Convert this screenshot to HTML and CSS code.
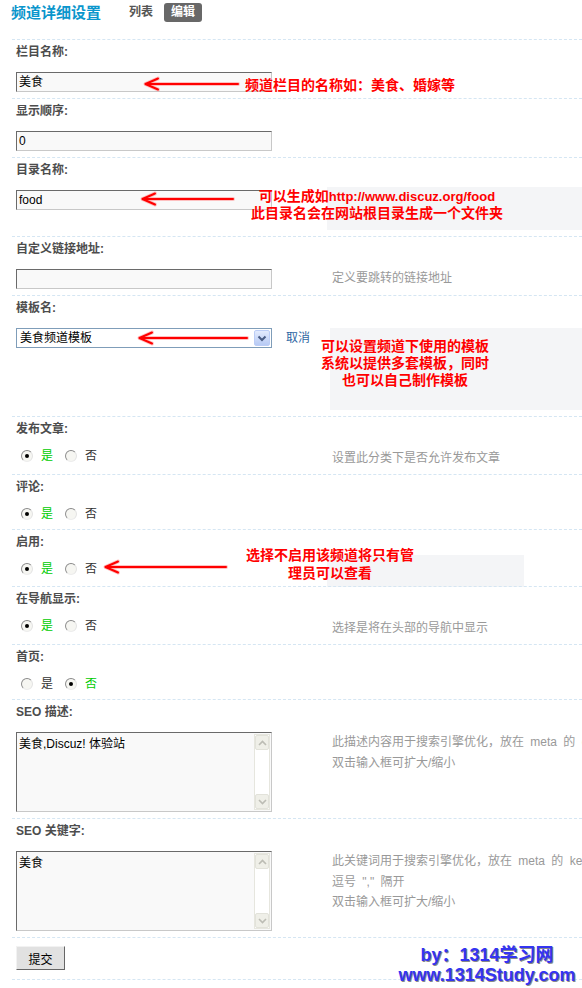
FILE: index.html
```html
<!DOCTYPE html>
<html lang="zh-CN">
<head>
<meta charset="utf-8">
<title>频道详细设置</title>
<link rel="stylesheet" href="styles.css">
</head>
<body>
<div class="page">
  <div class="header">
    <h1 class="title">频道详细设置</h1>
    <a class="tab tab-list" href="#">列表</a>
    <span class="tab tab-active">编辑</span>
  </div>

  <div class="form">
    <div class="row">
      <div class="label">栏目名称:</div>
      <div class="content">
        <div class="field"><div class="input">美食</div></div>
      </div>
      <svg class="arrow arrow-1" width="96" height="14" viewBox="0 0 96 14"><path d="M3 7 H95" class="glow"/><path d="M15 1.5 L2.5 7 L15 12.5" class="glow"/><path d="M3 7 H95" class="stroke"/><path d="M15 1.5 L2.5 7 L15 12.5" class="stroke"/></svg>
      <div class="note note-1">频道栏目的名称如：美食、婚嫁等</div>
    </div>

    <div class="row">
      <div class="label">显示顺序:</div>
      <div class="content">
        <div class="field"><div class="input">0</div></div>
      </div>
    </div>

    <div class="row">
      <div class="label">目录名称:</div>
      <div class="content">
        <div class="field"><div class="input">food</div></div>
        <div class="tip tip-dir"></div>
      </div>
      <svg class="arrow arrow-3" width="94" height="14" viewBox="0 0 94 14"><path d="M3 7 H93" class="glow"/><path d="M15 1.5 L2.5 7 L15 12.5" class="glow"/><path d="M3 7 H93" class="stroke"/><path d="M15 1.5 L2.5 7 L15 12.5" class="stroke"/></svg>
      <div class="note note-3">可以生成如<span class="note-latin">http://www.discuz.org/food</span><br>此目录名会在网站根目录生成一个文件夹</div>
    </div>

    <div class="row">
      <div class="label">自定义链接地址:</div>
      <div class="content">
        <div class="field"><div class="input"></div></div>
        <div class="hint">定义要跳转的链接地址</div>
      </div>
    </div>

    <div class="row">
      <div class="label">模板名:</div>
      <div class="content">
        <div class="field">
          <div class="select">
            <span class="select-text">美食频道模板</span>
            <span class="select-btn"><svg width="10" height="7" viewBox="0 0 10 7"><path d="M1.5 1.5 L5 5 L8.5 1.5" fill="none" stroke="#4a5d85" stroke-width="2"/></svg></span>
          </div>
          <a class="cancel" href="#">取消</a>
        </div>
        <div class="tip tip-tpl"></div>
      </div>
      <svg class="arrow arrow-5" width="111" height="14" viewBox="0 0 111 14"><path d="M3 7 H110" class="glow"/><path d="M15 1.5 L2.5 7 L15 12.5" class="glow"/><path d="M3 7 H110" class="stroke"/><path d="M15 1.5 L2.5 7 L15 12.5" class="stroke"/></svg>
      <div class="note note-5">可以设置频道下使用的模板<br>系统以提供多套模板，同时<br>也可以自己制作模板</div>
    </div>

    <div class="row">
      <div class="label">发布文章:</div>
      <div class="content">
        <div class="field">
          <div class="radios">
            <span class="opt on"><span class="radio"></span><span class="opt-text">是</span></span>
            <span class="opt"><span class="radio"></span><span class="opt-text">否</span></span>
          </div>
        </div>
        <div class="hint">设置此分类下是否允许发布文章</div>
      </div>
    </div>

    <div class="row">
      <div class="label">评论:</div>
      <div class="content">
        <div class="field">
          <div class="radios">
            <span class="opt on"><span class="radio"></span><span class="opt-text">是</span></span>
            <span class="opt"><span class="radio"></span><span class="opt-text">否</span></span>
          </div>
        </div>
      </div>
    </div>

    <div class="row">
      <div class="label">启用:</div>
      <div class="content">
        <div class="field">
          <div class="radios">
            <span class="opt on"><span class="radio"></span><span class="opt-text">是</span></span>
            <span class="opt"><span class="radio"></span><span class="opt-text">否</span></span>
          </div>
        </div>
        <div class="tip tip-on"></div>
      </div>
      <svg class="arrow arrow-8" width="124" height="14" viewBox="0 0 124 14"><path d="M3 7 H123" class="glow"/><path d="M15 1.5 L2.5 7 L15 12.5" class="glow"/><path d="M3 7 H123" class="stroke"/><path d="M15 1.5 L2.5 7 L15 12.5" class="stroke"/></svg>
      <div class="note note-8">选择不启用该频道将只有管<br>理员可以查看</div>
    </div>

    <div class="row">
      <div class="label">在导航显示:</div>
      <div class="content">
        <div class="field">
          <div class="radios">
            <span class="opt on"><span class="radio"></span><span class="opt-text">是</span></span>
            <span class="opt"><span class="radio"></span><span class="opt-text">否</span></span>
          </div>
        </div>
        <div class="hint">选择是将在头部的导航中显示</div>
      </div>
    </div>

    <div class="row">
      <div class="label">首页:</div>
      <div class="content">
        <div class="field">
          <div class="radios">
            <span class="opt"><span class="radio"></span><span class="opt-text">是</span></span>
            <span class="opt on"><span class="radio"></span><span class="opt-text">否</span></span>
          </div>
        </div>
      </div>
    </div>

    <div class="row">
      <div class="label">SEO 描述:</div>
      <div class="content">
        <div class="field">
          <div class="textarea">
            <div class="ta-text">美食,Discuz! 体验站</div>
            <div class="scroll">
              <span class="sbtn"><svg width="9" height="6" viewBox="0 0 9 6"><path d="M1 5 L4.5 1.5 L8 5" fill="none" stroke="#bcbcb4" stroke-width="1.6"/></svg></span>
              <span class="sbtn"><svg width="9" height="6" viewBox="0 0 9 6"><path d="M1 1 L4.5 4.5 L8 1" fill="none" stroke="#bcbcb4" stroke-width="1.6"/></svg></span>
            </div>
          </div>
        </div>
        <div class="hint hint-multi">此描述内容用于搜索引擎优化，放在 meta 的 description 标签中<br>双击输入框可扩大/缩小</div>
      </div>
    </div>

    <div class="row">
      <div class="label">SEO 关键字:</div>
      <div class="content">
        <div class="field">
          <div class="textarea">
            <div class="ta-text">美食</div>
            <div class="scroll">
              <span class="sbtn"><svg width="9" height="6" viewBox="0 0 9 6"><path d="M1 5 L4.5 1.5 L8 5" fill="none" stroke="#bcbcb4" stroke-width="1.6"/></svg></span>
              <span class="sbtn"><svg width="9" height="6" viewBox="0 0 9 6"><path d="M1 1 L4.5 4.5 L8 1" fill="none" stroke="#bcbcb4" stroke-width="1.6"/></svg></span>
            </div>
          </div>
        </div>
        <div class="hint hint-multi hint-kw">此关键词用于搜索引擎优化，放在 meta 的 keyword 标签中，多个关键字间请用半角<br>逗号 "," 隔开<br>双击输入框可扩大/缩小</div>
      </div>
    </div>

    <div class="row row-last">
      <button class="btn" type="button">提交</button>
      <div class="watermark">by：1314学习网<br>www.1314Study.com</div>
    </div>
  </div>
</div>
</body>
</html>
```

FILE: styles.css
```css
* {
  box-sizing: border-box;
}

html {
  margin: 0;
  padding: 0;
  background: #fff;
  overflow: hidden;
}

body {
  margin: 0;
  padding: 0;
  min-height: 988px;
  background: #fff;
  font-family: "Liberation Sans", "Noto Sans CJK SC", sans-serif;
  font-size: 12px;
  line-height: 1.4;
  color: #333;
}

.page {
  width: 582px;
  padding-left: 11px;
}

/* header */
.header {
  display: flex;
  align-items: center;
  height: 25px;
  margin-bottom: 14px;
}

.title {
  margin: 0;
  font-size: 15px;
  font-weight: bold;
  line-height: 20px;
  color: #0a96cc;
}

.tab {
  font-weight: bold;
  color: #555;
  text-decoration: none;
  line-height: 19px;
}

.tab-list {
  margin-left: 28px;
}

.tab-active {
  margin-left: 11px;
  height: 19px;
  padding: 0 7px;
  border-radius: 3px;
  background: #686868;
  color: #fff;
}

/* form rows */
.form {
  margin-left: 1px;
}

.row {
  position: relative;
  border-top: 1px dashed #d5e6f3;
  padding: 4px 0 6px 4px;
}

.row-last {
  border-bottom: 1px dashed #d5e6f3;
  padding: 8px 0 9px 4px;
}

.label {
  height: 16px;
  line-height: 16px;
  margin-bottom: 12px;
  font-weight: bold;
  color: #4d4d4d;
}

.content {
  display: flex;
  align-items: flex-start;
  min-height: 16px;
}

.field {
  flex: none;
  width: 316px;
  display: flex;
  align-items: center;
}

.hint {
  flex: 1;
  min-width: 0;
  color: #999;
  line-height: 19px;
  white-space: nowrap;
  overflow: hidden;
}

.hint-multi {
  line-height: 21px;
  word-spacing: 3px;
}

.hint-kw {
  line-height: 20.5px;
}

/* grey boxes left over from the annotated screenshot */
.tip {
  background: #f4f5f7;
}

.tip-dir {
  flex: 1;
  height: 43px;
  margin: -3px 0 0 -5px;
}

.tip-tpl {
  flex: 1;
  height: 82px;
  margin-left: -2px;
}

.tip-on {
  flex: none;
  width: 197px;
  height: 32px;
  margin: -7px 0 -7px -5px;
}

/* inputs */
.input {
  width: 256px;
  height: 20px;
  padding: 0 2px;
  border: 1px solid;
  border-color: #6a6a6a #c8c8c8 #c8c8c8 #6a6a6a;
  background: #f9f9f9;
  line-height: 18px;
  color: #000;
}

.select {
  width: 256px;
  height: 20px;
  display: flex;
  align-items: center;
  justify-content: space-between;
  padding: 1px 1px 1px 3px;
  border: 1px solid #7f9db9;
  background: #fff;
  color: #000;
}

.select-text {
  line-height: 16px;
}

.select-btn {
  width: 16px;
  height: 16px;
  display: flex;
  align-items: center;
  justify-content: center;
  border: 1px solid #bccdf6;
  border-radius: 2px;
  background: linear-gradient(#e3ebfd, #b7caf4);
}

.cancel {
  margin-left: 14px;
  color: #2d66a3;
  text-decoration: none;
}

/* radios */
.radios {
  display: flex;
  align-items: center;
  height: 14px;
  padding-left: 5px;
}

.opt {
  display: flex;
  align-items: center;
  margin-right: 12px;
}

.radio {
  width: 12px;
  height: 12px;
  margin-right: 8px;
  display: flex;
  align-items: center;
  justify-content: center;
  border: 1px solid;
  border-color: #888 #e3e3e3 #ececec #8f8f8f;
  border-radius: 50%;
  background: #f6f6f2;
}

.opt.on .radio::after {
  content: "";
  width: 4px;
  height: 4px;
  border-radius: 50%;
  background: #000;
}

.opt-text {
  color: #333;
  line-height: 14px;
}

.opt.on .opt-text {
  color: #00cc00;
}

/* textareas */
.textarea {
  width: 256px;
  height: 80px;
  display: flex;
  border: 1px solid;
  border-color: #6a6a6a #c8c8c8 #c8c8c8 #6a6a6a;
  background: #f9f9f9;
}

.ta-text {
  flex: 1;
  padding: 3px 2px;
  line-height: 16px;
  color: #000;
}

.scroll {
  width: 16px;
  margin: 1px 1px 1px 0;
  display: flex;
  flex-direction: column;
  justify-content: space-between;
  border: 1px solid #e6e6de;
  background: #fff;
}

.sbtn {
  height: 15px;
  display: flex;
  align-items: center;
  justify-content: center;
  border: 1px solid #e2e2da;
  border-radius: 2px;
  background: #efefe8;
}

/* submit */
.btn {
  width: 49px;
  height: 24px;
  margin: 0;
  padding: 0;
  display: block;
  border: 1px solid;
  border-color: #f2f2f2 #666 #666 #f2f2f2;
  background: #e1e1e1;
  font-family: "Liberation Sans", "Noto Sans CJK SC", sans-serif;
  font-size: 12px;
  color: #000;
}

/* annotations drawn over the screenshot */
.arrow {
  position: absolute;
  overflow: visible;
}

.arrow .stroke {
  fill: none;
  stroke: #ff0000;
  stroke-width: 2;
  stroke-linecap: round;
  stroke-linejoin: round;
}

.arrow .glow {
  fill: none;
  stroke: #ff9a9a;
  stroke-width: 4;
  stroke-linecap: round;
  stroke-linejoin: round;
  opacity: 0.6;
}

.arrow-1 { left: 131px; top: 37px; }
.arrow-3 { left: 128px; top: 34px; }
.arrow-5 { left: 125px; top: 35px; }
.arrow-8 { left: 91px; top: 30px; }

.note {
  position: absolute;
  color: #ff0000;
  font-weight: bold;
  font-size: 14px;
  white-space: nowrap;
  text-align: center;
}

.note-latin {
  font-size: 13px;
}

.note-1 {
  left: 233px;
  top: 36px;
  line-height: 18px;
  text-align: left;
}

.note-3 {
  left: 215px;
  top: 30px;
  width: 300px;
  line-height: 17px;
}

.note-5 {
  left: 293px;
  top: 42px;
  width: 200px;
  line-height: 17px;
}

.note-8 {
  left: 218px;
  top: 16px;
  width: 200px;
  line-height: 18px;
}

.watermark {
  position: absolute;
  left: 375px;
  top: 7px;
  width: 200px;
  text-align: center;
  font-family: "Liberation Sans", "Noto Sans CJK SC", sans-serif;
  font-size: 18px;
  font-weight: bold;
  line-height: 20px;
  color: #3434f2;
  text-shadow: 1px 1px 0 #8a8a8a;
  white-space: nowrap;
}
```
